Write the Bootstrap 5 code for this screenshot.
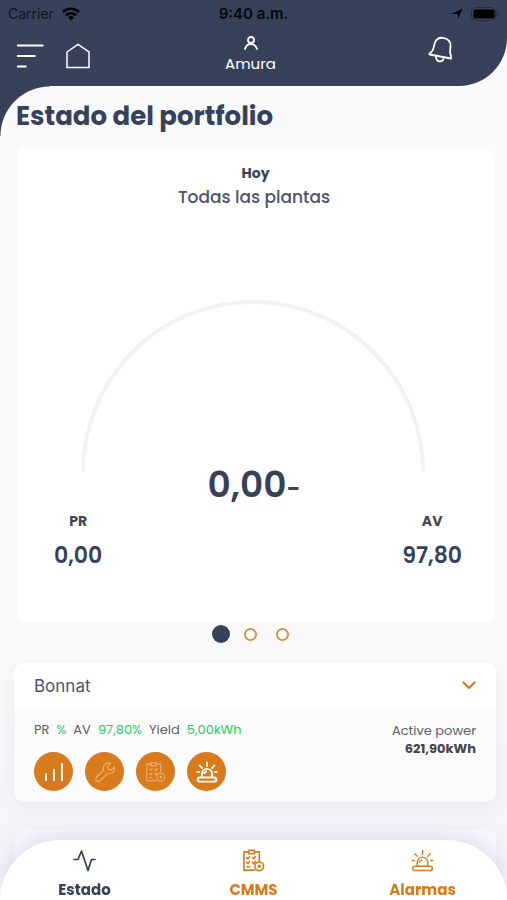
<!DOCTYPE html>
<html lang="es">
<head>
<meta charset="utf-8">
<meta name="viewport" content="width=device-width, initial-scale=1">
<title>Estado del portfolio</title>
<link href="https://cdn.jsdelivr.net/npm/bootstrap@5.3.0/dist/css/bootstrap.min.css" rel="stylesheet">
<style>
:root { --navy: #37425a; --orange: #d87b1c; --page: #fafafa; }
body { font-family: Poppins, Inter, "Liberation Sans", sans-serif; background: var(--page); color: var(--navy); }
svg { display: block; fill: none; stroke: currentColor; stroke-linecap: round; stroke-linejoin: round; }
.app-header { background: var(--navy); border-bottom-right-radius: 48px; color: #fff; }
.status-bar { display: grid; grid-template-columns: 1fr auto 1fr; height: 28px; padding: 0 8px; font: 14px/28px Inter, "Liberation Sans", sans-serif; color: #10141c; }
.status-time { font-weight: 600; color: #05070b; font-size: 15px; }
.toolbar { display: grid; grid-template-columns: 1fr auto 1fr; height: 58px; padding: 0 54px 2px 16px; }
.toolbar-start { gap: 22px; }
.account { font-size: 15px; line-height: 20px; margin-left: 32px; }
.ink { color: #000; }
.app-main { background: radial-gradient(circle at 50px 50px, transparent 49px, var(--navy) 50px) 0 0 / 50px 50px no-repeat; }
.page-title { font-size: 26px; line-height: 36px; font-weight: 700; padding: 12px 16px 0; }
.summary { margin: 14px 14px 0 18px; border-radius: 8px; background: #fff; height: 474px; padding-top: 15px; }
.day { font-size: 14px; line-height: 20px; }
.scope { font-size: 17px; line-height: 28px; font-weight: 500; padding-right: 3px; color: #4a546b; }
.gauge-wrap { padding: 89px 6px 0 0; color: #f2f2f2; }
.gauge { width: 344px; max-width: 76%; }
.total { font-size: 36px; line-height: 48px; font-weight: 600; margin-top: -11px; padding-right: 3px; }
.total small { font-size: 24px; }
.kpis { padding: 0 31px 0 36px; }
.kpi-name { font-size: 14px; line-height: 16px; font-weight: 700; color: #44464c; }
.kpi-value { font-size: 22px; line-height: 32px; font-weight: 600; margin-top: 11px; }
.pager { height: 24px; padding-right: 7px; }
.pager button { padding: 0; border: 2px solid #dc8f42; border-radius: 50%; width: 13px; height: 13px; background: #fff; margin-right: 19px; }
.pager button.current { width: 18px; height: 18px; border: 0; background: var(--navy); margin-right: 14px; }
.pager button:last-child { margin-right: 0; }
.plants { padding: 17px 11px 0 14px; background: linear-gradient(#fafafa, #f3f4f8); }
.plant { border-radius: 10px; background: #fbfbfb; box-shadow: 0 4px 16px #dfe2ec99; overflow: hidden; }
.plant-head { height: 45px; padding: 0 20px; background: #fff; border: 0; color: #4a546b; font: 17px Inter, "Liberation Sans", sans-serif; }
.chevron { color: var(--orange); }
.plant-body { padding: 12px 20px 11px; font-size: 13px; line-height: 20px; color: #5c5f66; }
.readings { gap: 7px; }
.good { color: #1fcf62; }
.power { line-height: 18px; padding-top: 2px; font-size: 13px; }
.power b { color: #44464c; font-weight: 700; }
.round-btn { width: 39px; height: 39px; padding: 0; border: 0; border-radius: 50%; background: var(--orange); color: #fff; }
.faint { color: #f0b273; }
.next-plant { height: 48px; margin-top: 27px; background: #f6f7fc; }
.tabs { height: 60px; background: #fff; border-radius: 60px 60px 0 0; box-shadow: 0 -4px 16px #c9cde299; }
.tabs a { flex: 1 1 0; font-size: 15px; line-height: 20px; font-weight: 700; color: var(--orange); text-decoration: none; padding-top: 9px; }
.tabs a.current { color: var(--navy); }
.tabs svg { margin-bottom: 8px; }
</style>
<script src="https://cdn.jsdelivr.net/npm/bootstrap@5.3.0/dist/js/bootstrap.bundle.min.js"></script>
</head>
<body>
<svg width="0" height="0" class="position-absolute" aria-hidden="true">
  <symbol id="siren" viewBox="0 0 24 24"><path d="M6.500 18v-4a5.500 5.500 0 0 1 11 0v4M9 13.500a3 3 0 0 1 2-2M4 18h16a2 2 0 0 1 0 4.500H4A2 2 0 0 1 4 18zM12 1.500v4M4 5l2.500 2.500M20 5l-2.500 2.500M1.500 12h2M20.500 12h2"/></symbol>
  <symbol id="tasks" viewBox="0 0 24 24"><path d="M6 3H2v19h11M14 3h4v9M7 1.500h6v3.500H7zM5 9l1.200 1.200L8 8M11 9l1.200 1.200L14 8M5 14l1.200 1.200L8 13M11 14l1.200 1.200L14 13M5 18.500h3"/><circle cx="18" cy="18" r="4.500"/><circle cx="18" cy="18" r="1"/></symbol>
</svg>
<header class="app-header">
  <div class="status-bar">
    <div class="d-flex align-items-center gap-2"><span>Carrier</span>
      <svg class="ink" width="18" height="14" viewBox="0 0 18 14" stroke-width="2.600" style="stroke-linecap:butt"><path d="M1 5a11.500 11.500 0 0 1 16 0M4 8.300a7 7 0 0 1 10 0"/><path d="M9 13.500 6 10.500a4.300 4.300 0 0 1 6 0z" fill="#000" stroke="none"/></svg>
    </div>
    <div class="status-time">9:40 a.m.</div>
    <div class="d-flex align-items-center justify-content-end gap-2">
      <svg width="12" height="12" viewBox="0 0 12 12"><path d="M11.500.5 7 11.500V6H.500z" fill="#000" stroke="none"/></svg>
      <svg width="28" height="14" viewBox="0 0 28 14"><rect x=".5" y=".5" width="24" height="13" rx="4" stroke="#252d3e"/><rect x="2.500" y="2.500" width="21" height="9" rx="2" fill="#000" stroke="none"/><path d="M26.500 5v4" stroke="#252d3e" stroke-width="1.500"/></svg>
    </div>
  </div>
  <div class="toolbar">
    <div class="toolbar-start d-flex align-items-center">
      <button class="btn p-0 border-0 text-white" aria-label="Menú"><svg width="28" height="24" viewBox="0 0 28 24" stroke-width="2" style="stroke-linecap:butt"><path d="M1 1.500h26.500M1 12h18.500M1 22.500h9.500"/></svg></button>
      <a href="#" class="text-white" aria-label="Inicio"><svg width="24" height="26" viewBox="0 0 24 26" stroke-width="1.500" style="stroke-linejoin:miter"><path d="M1 9 12 1.500 23 9v15.500H1z"/></svg></a>
    </div>
    <div class="account d-flex flex-column align-items-center pt-2">
      <svg width="14" height="14" viewBox="0 0 14 14" stroke-width="1.800"><circle cx="7" cy="4" r="3"/><path d="M1 13c1-3.500 3-5 6-5s5 1.500 6 5"/></svg>
      <span class="mt-1">Amura</span>
    </div>
    <div class="d-flex justify-content-end align-items-start pt-2">
      <button class="btn p-0 border-0 text-white" aria-label="Notificaciones"><svg width="25" height="28" viewBox="0 0 25 28" stroke-width="1.800"><path d="M1.500 17.500c5-2.500 3.500-6 5.500-11C8.500 3 11.500 1.500 15 1.800c5 .5 8 4 7.500 8.500-.5 4.500-1 7.500.5 9v3.200L1.500 18.500zM8 20.500c0 6 6.500 6.500 8 1.300"/></svg></button>
    </div>
  </div>
</header>
<main class="app-main">
  <h1 class="page-title m-0">Estado del portfolio</h1>
  <section class="summary text-center">
    <h2 class="day fw-bold m-0">Hoy</h2>
    <p class="scope m-0">Todas las plantas</p>
    <div class="gauge-wrap"><svg class="gauge mx-auto" viewBox="0 0 344 172" stroke-width="4" style="stroke-linecap:butt"><path d="M2 172a170 170 0 0 1 340 0"/></svg></div>
    <div class="total">0,00<small>-</small></div>
    <div class="kpis d-flex justify-content-between">
      <div><div class="kpi-name">PR</div><div class="kpi-value">0,00</div></div>
      <div><div class="kpi-name">AV</div><div class="kpi-value">97,80</div></div>
    </div>
  </section>
  <div class="pager d-flex justify-content-center align-items-center">
    <button class="current" aria-label="Página 1"></button><button aria-label="Página 2"></button><button aria-label="Página 3"></button>
  </div>
  <section class="plants">
    <article class="plant">
      <button class="plant-head w-100 d-flex align-items-center justify-content-between"><span>Bonnat</span>
        <svg class="chevron" width="14" height="9" viewBox="0 0 14 9" stroke-width="2.200"><path d="m1.500 1.500 5.500 5.500 5.500-5.500"/></svg>
      </button>
      <div class="plant-body d-flex justify-content-between">
        <div>
          <div class="readings d-flex"><span>PR</span><span class="good">%</span><span>AV</span><span class="good">97,80%</span><span>Yield</span><span class="good">5,00kWh</span></div>
          <div class="d-flex gap-2 mt-2 pt-1">
            <button class="round-btn d-flex align-items-center justify-content-center me-1" aria-label="Gráficos"><svg width="20" height="20" viewBox="0 0 20 20" stroke-width="1.800" style="stroke-linecap:butt"><path d="M2 11.500V19M10 7v12M18 1v18"/></svg></button>
            <button class="round-btn faint d-flex align-items-center justify-content-center me-1" aria-label="Mantenimiento"><svg width="22" height="22" viewBox="0 0 24 24" stroke-width="1.200"><path d="m2.500 18 8-8C9 5 13 .500 18 2.500l-3.500 3.500 1 3 3 1L22 6.500c1.500 5-3 8.500-7.500 7.500L6 22c-2.500 1.500-5-1.500-3.500-4z"/></svg></button>
            <button class="round-btn faint d-flex align-items-center justify-content-center me-1" aria-label="Tareas"><svg width="21" height="22" stroke-width="1.200"><use href="#tasks"/></svg></button>
            <button class="round-btn d-flex align-items-center justify-content-center" aria-label="Alarmas de planta"><svg width="22" height="22" stroke-width="2"><use href="#siren"/></svg></button>
          </div>
        </div>
        <div class="power text-end">Active power<br><b>621,90kWh</b></div>
      </div>
    </article>
    <article class="plant next-plant"></article>
  </section>
</main>
<nav class="tabs fixed-bottom d-flex">
  <a href="#" class="current d-flex flex-column align-items-center"><svg width="23" height="23" viewBox="0 0 23 23" stroke-width="1.700"><path d="M1 10.500h4L8.500 2l6.500 19.500 3.500-11H22"/></svg>Estado</a>
  <a href="#" class="d-flex flex-column align-items-center"><svg width="23" height="23" stroke-width="1.700"><use href="#tasks"/></svg>CMMS</a>
  <a href="#" class="d-flex flex-column align-items-center"><svg width="23" height="23" stroke-width="1.500"><use href="#siren"/></svg>Alarmas</a>
</nav>
</body>
</html>
